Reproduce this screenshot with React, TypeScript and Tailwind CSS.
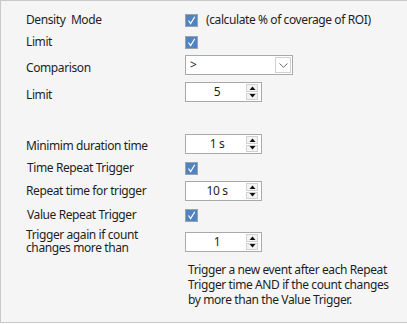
import React from "react";

const font = { fontFamily: '"Noto Sans", "Open Sans", Arial, sans-serif' };

const CheckBox: React.FC = () => (
  <div className="w-[13px] h-[13px] border border-[#9aa3ad] bg-[#4f84c0] flex items-center justify-center">
    <svg width="11" height="11" viewBox="0 0 11 11">
      <path d="M2.5 5.5 L4.6 8.6 L8.8 1.8" fill="none" stroke="#ffffff" strokeWidth="1.2" />
    </svg>
  </div>
);

const SpinBox: React.FC<{ value: string }> = ({ value }) => (
  <div className="w-[77px] h-[20px] border border-[#a9a9a9] bg-white flex items-center">
    <span className="flex-1 text-center text-[12px] leading-none text-[#1e1e1e] pl-[2px]">
      {value}
    </span>
    <div className="w-[12px] h-[16px] mr-[3px] flex flex-col gap-[1px]">
      <div className="flex-1 border border-[#d2d2d2] bg-[#f4f4f4] flex items-center justify-center">
        <svg width="7" height="4" viewBox="0 0 7 4">
          <path d="M0.5 4 L3.5 0.5 L6.5 4 Z" fill="#111111" />
        </svg>
      </div>
      <div className="flex-1 border border-[#d2d2d2] bg-[#f4f4f4] flex items-center justify-center">
        <svg width="7" height="4" viewBox="0 0 7 4">
          <path d="M0.5 0 L3.5 3.5 L6.5 0 Z" fill="#111111" />
        </svg>
      </div>
    </div>
  </div>
);

const ComboBox: React.FC<{ value: string }> = ({ value }) => (
  <div className="w-[108px] h-[20px] border border-[#a9a9a9] bg-white flex items-center">
    <span className="flex-1 pl-[4px] text-[12px] leading-none text-[#1e1e1e]">{value}</span>
    <div className="w-[16px] h-[16px] mr-[1px] border border-[#d0d0d0] bg-white flex items-center justify-center">
      <svg width="9" height="5" viewBox="0 0 9 5">
        <path d="M0.5 0.5 L4.5 4.3 L8.5 0.5" fill="none" stroke="#6a6a6a" strokeWidth="1" />
      </svg>
    </div>
  </div>
);

const Label: React.FC<{ children: React.ReactNode; className?: string }> = ({
  children,
  className = "",
}) => (
  <div className={`w-[159px] shrink-0 text-[12px] text-[#1e1e1e] whitespace-pre ${className}`}>
    {children}
  </div>
);

export default function App() {
  return (
    <div
      className="w-[407px] h-[323px] bg-[#f5f5f5] border-l border-t border-b border-[#c9c9c9] pl-[25px] pt-[9px] tracking-[-0.4px]"
      style={font}
    >
      <div className="h-[20px] flex items-center">
        <Label>Density  Mode</Label>
        <CheckBox />
        <span className="ml-[8px] text-[12px] text-[#1e1e1e]">
          (calculate % of coverage of ROI)
        </span>
      </div>
      <div className="h-[20px] mt-[2px] flex items-center">
        <Label>Limit</Label>
        <CheckBox />
      </div>
      <div className="h-[20px] mt-[3px] flex items-center">
        <Label className="pt-[6px]">Comparison</Label>
        <ComboBox value=">" />
      </div>
      <div className="h-[20px] mt-[7px] flex items-center">
        <Label className="pt-[5px]">Limit</Label>
        <SpinBox value="5" />
      </div>
      <div className="h-[20px] mt-[32px] flex items-center">
        <Label className="pt-[4px]">Minimim duration time</Label>
        <SpinBox value="1 s" />
      </div>
      <div className="h-[20px] mt-[4px] flex items-center">
        <Label className="pl-[1px]">Time Repeat Trigger</Label>
        <CheckBox />
      </div>
      <div className="h-[20px] mt-[3px] flex items-center">
        <Label>Repeat time for trigger</Label>
        <SpinBox value="10 s" />
      </div>
      <div className="h-[20px] mt-[4px] flex items-center">
        <Label className="pl-[1px]">Value Repeat Trigger</Label>
        <CheckBox />
      </div>
      <div className="h-[20px] mt-[7px] flex items-start">
        <Label className="-mt-[4px] leading-[13px]">
          {"Trigger again if count\nchanges more than"}
        </Label>
        <SpinBox value="1" />
      </div>
      <p className="mt-[10px] ml-[162px] w-[208px] text-[12px] leading-[15px] text-[#1e1e1e]">
        Trigger a new event after each Repeat Trigger time AND if the count changes by more
        than the Value Trigger.
      </p>
    </div>
  );
}
